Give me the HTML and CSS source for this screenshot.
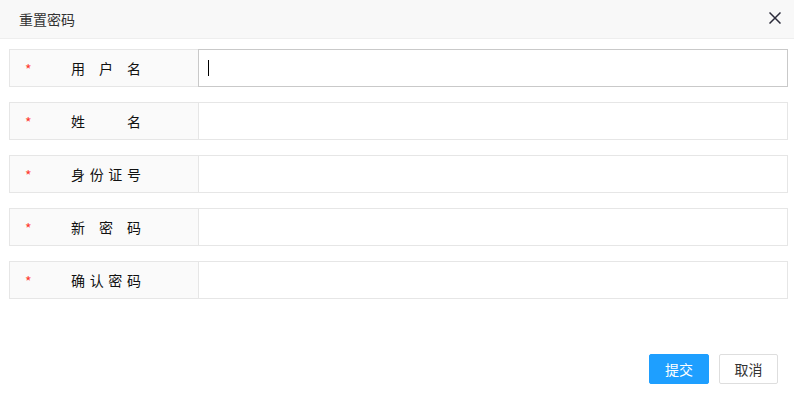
FILE: index.html
```html
<!DOCTYPE html>
<html lang="zh-CN">
<head>
    <meta charset="UTF-8">
    <title>重置密码</title>
    <link rel="stylesheet" href="styles.css">
</head>
<body>
    <div class="layer">
        <!-- Title bar -->
        <div class="layer-title">
            <span>重置密码</span>
            <svg class="close" width="12" height="12" viewBox="0 0 12 12">
                <path d="M0.5 0.5 L11.5 11.5 M11.5 0.5 L0.5 11.5" stroke="#2b2b3a" stroke-width="1.5"/>
            </svg>
        </div>

        <!-- Form -->
        <form class="reset-form">
            <div class="form-row">
                <label class="form-label"><i class="star">*</i><span class="label-text">用户名</span></label>
                <div class="field focused">
                    <input type="text" class="form-input">
                    <span class="caret"></span>
                </div>
            </div>
            <div class="form-row">
                <label class="form-label"><i class="star">*</i><span class="label-text">姓名</span></label>
                <div class="field"><input type="text" class="form-input"></div>
            </div>
            <div class="form-row">
                <label class="form-label"><i class="star">*</i><span class="label-text">身份证号</span></label>
                <div class="field"><input type="text" class="form-input"></div>
            </div>
            <div class="form-row">
                <label class="form-label"><i class="star">*</i><span class="label-text">新密码</span></label>
                <div class="field"><input type="password" class="form-input"></div>
            </div>
            <div class="form-row">
                <label class="form-label"><i class="star">*</i><span class="label-text">确认密码</span></label>
                <div class="field"><input type="password" class="form-input"></div>
            </div>
        </form>

        <!-- Buttons -->
        <div class="layer-btns">
            <a class="btn btn-primary">提交</a>
            <a class="btn">取消</a>
        </div>
    </div>
</body>
</html>
```

FILE: styles.css
```css
body {
    margin: 0;
    background: #fff;
    font-family: "Noto Sans CJK SC", "Noto Sans", sans-serif;
    color: #333;
}

/* Title bar */
.layer-title {
    height: 38px;
    border-bottom: 1px solid #eee;
    background-color: #f8f8f8;
    display: flex;
    align-items: center;
    justify-content: space-between;
    padding: 0 13px 0 19px;
    font-size: 14px;
    line-height: 38px;
    color: #333;
}
.close {
    display: block;
    margin-top: -3px;
}

/* Form rows */
.reset-form {
    padding: 10px 6px 0 9px;
}
.form-row {
    display: flex;
    height: 38px;
    margin-bottom: 15px;
}
.form-label {
    width: 189px;
    box-sizing: border-box;
    border: 1px solid #e6e6e6;
    border-right: none;
    background-color: #fafafa;
    display: flex;
    align-items: center;
    padding-left: 15px;
    font-size: 14px;
    line-height: 20px;
    color: #111;
}
.star {
    font-style: normal;
    color: #ff3b30;
    font-size: 14px;
    width: 7px;
    margin-top: 1px;
}
.label-text {
    display: inline-block;
    width: 70px;
    margin-left: 39px;
    text-align: justify;
    text-align-last: justify;
}
.field {
    flex: 1;
    position: relative;
}
.form-input {
    width: 100%;
    height: 38px;
    box-sizing: border-box;
    border: 1px solid #e6e6e6;
    outline: none;
    padding: 0 10px;
    font-size: 14px;
    background: #fff;
}
.focused .form-input {
    border-color: #c9c9c9;
}
.caret {
    position: absolute;
    left: 10px;
    top: 11px;
    width: 1px;
    height: 16px;
    background: #000;
}

/* Footer buttons */
.layer-btns {
    display: flex;
    justify-content: flex-end;
    gap: 10px;
    padding: 40px 16px 0 0;
}
.btn {
    box-sizing: border-box;
    width: 59px;
    height: 30px;
    line-height: 28px;
    text-align: center;
    border: 1px solid #dedede;
    border-radius: 2px;
    background-color: #fff;
    color: #333;
    font-size: 14px;
    cursor: pointer;
}
.btn-primary {
    width: 60px;
    border-color: #1e9fff;
    background-color: #1e9fff;
    color: #fff;
}
```
